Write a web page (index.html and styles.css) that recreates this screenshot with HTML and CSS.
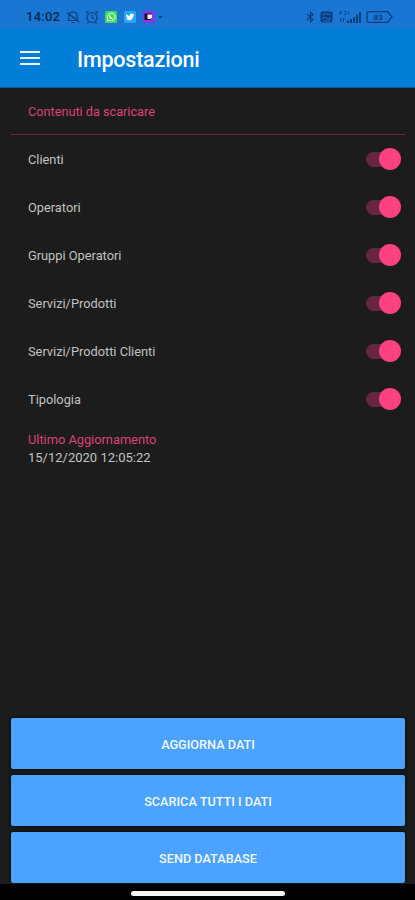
FILE: index.html
```html
<!DOCTYPE html>
<html lang="it">
<head>
<meta charset="utf-8">
<title>Impostazioni</title>
<link rel="stylesheet" href="styles.css">
</head>
<body>
<div class="screen">
  <div class="status">
    <span class="clock">14:02</span>
    <div class="notices">
      <svg width="14" height="14" viewBox="0 0 14 14" class="line"><path d="M3 10.500V6.500C3 3 5 2 7 2s4 1 4 4v4.500M1.500 10.500h11M5.500 12.500h3M1 2.500l12 9.500"/></svg>
      <svg width="14" height="14" viewBox="0 0 14 14" class="line"><circle cx="7" cy="7.500" r="5"/><path d="M7 5v3l2 .8M1 3l2.500-2M13 3l-2.500-2M3.500 12l-1 1.500M10.500 12l1 1.500"/></svg>
      <svg width="12" height="12" viewBox="0 0 12 12"><rect width="12" height="12" rx="1.500" fill="#43da61"/><path d="M2.300 10l.6-2.100A3.900 3.900 0 1 1 4.500 9.400z" fill="none" stroke="#e5ffe9"/><path d="M4.600 4.200c0 2 1.300 3.200 3 3.400" fill="none" stroke="#e5ffe9" stroke-width="1.300"/></svg>
      <svg width="12" height="12" viewBox="0 0 12 12"><rect width="12" height="12" rx="1.500" fill="#26a5f3"/><path d="M2 3c1 1.200 2.300 1.800 3.900 1.800C5.700 2.500 8 2 9 3.200l1.300-.4-.8 1.500C9.500 8 6.300 10.500 2 8.800c1 0 1.800-.2 2.300-.7C3 7.700 2.200 6.500 2 5z" fill="#fff"/></svg>
      <svg width="12" height="12" viewBox="0 0 12 12"><rect width="12" height="12" rx="1.500" fill="#8b35e6"/><path d="M1.500 2.500H9v5L7.500 9h-6z" fill="#17102a"/><path d="M4.500 3.500H9V7L8 8H4.500z" fill="#fff"/></svg>
      <i class="more"></i>
    </div>
    <div class="system">
      <svg width="9" height="14" viewBox="0 0 9 14" class="line"><path d="M1 4l6 5.500L4.500 12V2L7 4.500 1 10"/></svg>
      <svg width="13" height="12" viewBox="0 0 13 12"><rect x=".5" y=".5" width="12" height="11" rx="2" fill="#0b3d7c"/><path d="M3 4.500V3h7v1.500M3 8.500V6l7 2.500V6M3 10h7" fill="none" stroke="#1976d2"/></svg>
      <svg width="23" height="12" viewBox="0 0 23 12"><path d="M2.500 0v3M1 2h3M6 .5h2v3H6M10.500.5v3M3 7v4M1.800 9.500L3 11M5.500 11V7L7 8.500" fill="none" stroke="#0b3d7c" stroke-width=".8"/><path d="M9 9.500h2V12H9zM12 8h2v4h-2zM15 6h2v6h-2zM18 3.500h2V12h-2zM21 1h2v11h-2z" fill="#0b3d7c"/></svg>
      <svg width="27" height="12" viewBox="0 0 27 12"><path d="M3 .7h18.500L26 6l-4.500 5.300H3a2 2 0 0 1-2-2V2.700a2 2 0 0 1 2-2z" fill="none" stroke="#0b3d7c" stroke-width="1.300"/><text x="12.200" y="8.900" class="level">83</text></svg>
    </div>
  </div>
  <header class="toolbar">
    <svg width="20" height="16" viewBox="0 0 20 16"><path d="M0 2h20M0 8h20M0 14h20" stroke="#e9f4ff" stroke-width="2"/></svg>
    <h1>Impostazioni</h1>
  </header>
  <main>
    <h2 class="section">Contenuti da scaricare</h2>
    <ul>
      <li><span>Clienti</span><i class="switch"></i></li>
      <li><span>Operatori</span><i class="switch"></i></li>
      <li><span>Gruppi Operatori</span><i class="switch"></i></li>
      <li><span>Servizi/Prodotti</span><i class="switch"></i></li>
      <li><span>Servizi/Prodotti Clienti</span><i class="switch"></i></li>
      <li><span>Tipologia</span><i class="switch"></i></li>
    </ul>
    <div class="updated"><span class="pink">Ultimo Aggiornamento</span><span>15/12/2020 12:05:22</span></div>
    <div class="actions">
      <button>AGGIORNA DATI</button>
      <button>SCARICA TUTTI I DATI</button>
      <button>SEND DATABASE</button>
    </div>
  </main>
  <footer><i></i></footer>
</div>
</body>
</html>
```
FILE: styles.css
```css
* { box-sizing: border-box; margin: 0; padding: 0; }
body { background: #1c1c1c; font-family: Roboto, sans-serif; }
.screen { width: 415px; height: 900px; display: flex; flex-direction: column; overflow: hidden; }
svg { display: block; flex: none; }
.status { height: 28px; background: #1976d2; display: flex; align-items: center; padding: 6px 22px 0 26px; }
.clock { width: 40px; font-size: 13px; font-weight: 500; line-height: 16px; letter-spacing: .25px; color: #08284f; }
.line { fill: none; stroke: #0b3d7c; stroke-width: 1.1; }
.notices { display: flex; align-items: center; gap: 7px; }
.notices svg:nth-child(2) { margin-left: -2px; }
.notices svg:nth-child(3) { margin-left: -1px; }
.more { width: 3px; height: 2px; margin-left: -3px; background: #0b3d7c; }
.system { margin-left: auto; display: flex; align-items: center; gap: 5px; }
.level { font-size: 8px; font-weight: 700; text-anchor: middle; fill: #0b3d7c; }
.toolbar { height: 60px; background: #027dd8; display: flex; align-items: center; padding-left: 20px; gap: 37px; border-bottom: 1px solid #075a98; }
h1 { font-size: 21.500px; font-weight: 500; line-height: 28px; letter-spacing: -.2px; color: #fff; margin-top: 4px; }
main { flex: 1; display: flex; flex-direction: column; padding: 0 10px 1px 11px; }
.section { height: 47px; padding-left: 17px; font-size: 12.700px; font-weight: 400; line-height: 47px; color: #dd4278; border-bottom: 1px solid #6b2941; }
ul { list-style: none; }
li { height: 48px; display: flex; align-items: center; justify-content: space-between; padding: 0 4px 0 17px; font-size: 12.800px; color: #c2c2c2; }
.switch { width: 35px; height: 22px; display: grid; align-items: center; justify-items: end; }
.switch::before, .switch::after { content: ""; grid-area: 1 / 1; }
.switch::before { justify-self: start; width: 30px; height: 15px; border-radius: 8px; background: #652640; }
.switch::after { width: 22px; height: 22px; border-radius: 50%; background: #ff4081; }
.updated { display: flex; flex-direction: column; padding: 8px 0 0 17px; font-size: 13px; line-height: 18px; color: #c2c2c2; }
.pink { font-size: 12.800px; color: #dd4278; }
.actions { margin-top: auto; display: flex; flex-direction: column; gap: 6px; }
button { height: 51px; padding-top: 2px; border: 0; border-radius: 2px; background: #4ba3ff; color: #f2f8ff; font: 500 12.700px/49px Roboto, sans-serif; box-shadow: 0 0 3px 1px #0c0c0c; }
footer { height: 16px; background: #000; display: flex; align-items: center; justify-content: center; padding: 2px 0 0 1px; }
footer i { width: 154px; height: 5px; border-radius: 2.500px; background: #f5f5f5; }
```
